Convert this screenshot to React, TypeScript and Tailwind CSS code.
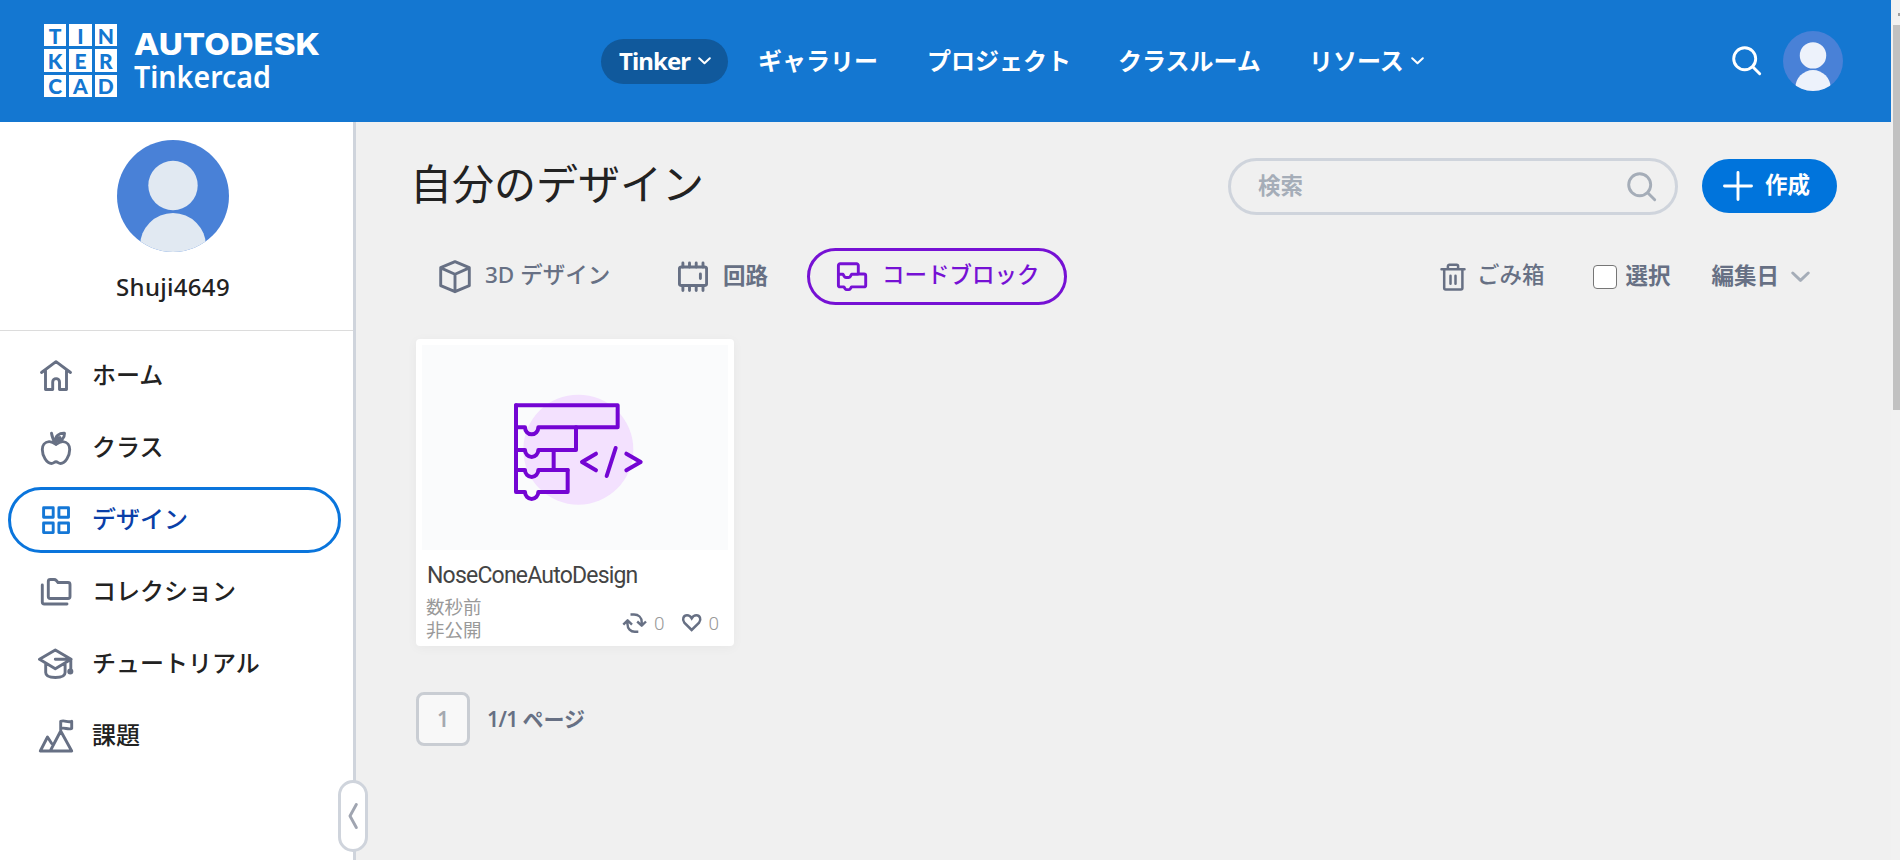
import { FC, ReactNode, SVGProps } from 'react';

type IconProps = SVGProps<SVGSVGElement>;

const Icon: FC<IconProps> = ({ children, ...props }) => (
  <svg
    fill="none"
    stroke="currentColor"
    strokeWidth={2.9}
    strokeLinecap="round"
    strokeLinejoin="round"
    {...props}
  >
    {children}
  </svg>
);

const HomeIcon = () => (
  <Icon width="36" height="36" viewBox="-2 -2 36 36">
    <path d="M1.5 12.5 16 1.7l14.5 10.8M5.5 10.5V29.5h7.2V22a3.4 3.4 0 0 1 6.8 0v7.5h7V10.5" />
  </Icon>
);

const AppleIcon = () => (
  <Icon width="36" height="36" viewBox="-2 -1 36 36">
    <path d="M16 13.5c-2.2-1.8-4.6-3-7-2.9C4.700 10.900 2.300 14.500 2.300 18.500c0 6 4.200 14 9.200 14 2 0 2.700-1.700 4.500-1.700s2.500 1.700 4.500 1.700c5 0 9.200-8 9.200-14 0-4-2.400-7.600-6.700-7.900-2.400-.1-4.800 1.100-7 2.900ZM11.500 2.300c.6 4.500 2 7.200 4.500 11.200M15.500 9.500c-.3-4.700 3.700-7.500 9-7.200.1 4.500-2.500 8.200-9 7.200Zm0 0 4.500-3" />
  </Icon>
);

const GridIcon = () => (
  <Icon width="36" height="36" viewBox="-4 -4 36 36">
    <rect x="1.600" y="1.700" width="9.600" height="9.600" />
    <rect x="16.900" y="1.700" width="9.600" height="9.600" />
    <rect x="1.600" y="17" width="9.600" height="9.600" />
    <rect x="16.900" y="17" width="9.600" height="9.600" />
  </Icon>
);

const FolderIcon = () => (
  <Icon width="36" height="36" viewBox="-2 -3 36 36">
    <path d="M8.300 4.500a2 2 0 0 1 2-2h3.700a3 3 0 0 1 2.300 1l1.700 2h10a2 2 0 0 1 2 2v12a2 2 0 0 1-2 2H10.300a2 2 0 0 1-2-2ZM2.300 8v17a2 2 0 0 0 2 2H27" />
  </Icon>
);

const CapIcon = () => (
  <Icon width="36" height="36" viewBox="0 -2 36 36">
    <path d="M1.500 11.300 17.300 2l15.800 9.300-15.800 9.400ZM17.300 11.300h15.500v11.500M7.700 16v8.500c0 3 3.500 5 9.700 5s9.700-2 9.700-5V16" />
    <circle cx="32.300" cy="23.500" r="1.600" fill="currentColor" />
  </Icon>
);

const MountainIcon = () => (
  <Icon width="36" height="36" viewBox="0 -1 36 36">
    <path d="M2.300 32 9.500 18l4.200 6.500M12.200 32 22.700 12 33.700 32ZM2.300 32h10M22.700 12V2.300c4-1.600 7 1.600 11 0V9.500c-4 1.600-7-1.600-11 0" />
  </Icon>
);

const CubeIcon = () => (
  <Icon width="34" height="35" viewBox="0 0 34 35">
    <path d="M17 2.700 31.300 8.700v18L17 32.700l-14.300-6v-18ZM2.700 8.900 17 15.300l14.300-6.400M17 15.300v17" />
  </Icon>
);

const ChipIcon = () => (
  <Icon width="30" height="32" viewBox="0 0 30 32">
    <rect x="1.400" y="6" width="27.200" height="18.500" rx="2" />
    <path d="M4.900 2v4M11.500 2v4M18.200 2v4M25 2v4M4.900 24.500v5M11.500 24.500v5M18.200 24.500v5M25 24.500v5M22.400 13v4.500" />
  </Icon>
);

const CodeblockIcon = () => (
  <Icon width="32" height="32" viewBox="0 0 32 32">
    <path d="M2.400 4.500a1.700 1.700 0 0 1 1.700-1.700h16.500a1.700 1.700 0 0 1 1.700 1.700V13H28a1.700 1.700 0 0 1 1.700 1.700v9.500a1.700 1.700 0 0 1-1.700 1.700H15.500l-1.200 1.800a2 2 0 0 1-1.700.9h-1.800a2 2 0 0 1-1.700-.9L7.900 25.900H4.100a1.700 1.700 0 0 1-1.700-1.700ZM2.400 13.300H7l1.300 2.200a2 2 0 0 0 1.700 1h2.600a2 2 0 0 0 1.700-1l1.300-2.200h6.700" />
  </Icon>
);

const TrashIcon = () => (
  <Icon width="26" height="30" viewBox="0 0 26 30" strokeWidth={2.5}>
    <path d="M1.500 7.300h23M7.900 7V4.200a1.500 1.500 0 0 1 1.500-1.500h7.200a1.500 1.500 0 0 1 1.500 1.500V7M4.200 7.300v18.800a1.500 1.500 0 0 0 1.500 1.500h15.200a1.500 1.500 0 0 0 1.500-1.500V7.300M10.500 13.700v8M15.500 13.700v8" />
  </Icon>
);

const SearchIcon: FC<IconProps> = props => (
  <Icon width="30" height="30" viewBox="0 0 30 30" {...props}>
    <circle cx="12.700" cy="12.700" r="11" />
    <path d="m20.700 20.700 7 7" />
  </Icon>
);

const ChevronDown: FC<IconProps> = props => (
  <Icon width="13" height="8" viewBox="0 0 13 8" strokeWidth={2} {...props}>
    <path d="m1.200 1.300 5.300 5 5.300-5" />
  </Icon>
);

const RemixIcon = () => (
  <Icon width="25" height="22" viewBox="0 0 25 22" strokeWidth={2.4} strokeLinecap="butt">
    <path d="M8.500 2.500h3.500c4.500 0 7.700 3 7.700 7.500v3M15.200 9.500l4.500 4.200 4.300-4.200M16.300 19.700h-3.500c-4.300 0-7.300-3.200-7.300-7.500V9.500M1.300 12.700l4.300-4.400L10 12.700" />
  </Icon>
);

const HeartIcon = () => (
  <Icon width="22" height="20" viewBox="0 0 22 20" strokeWidth={2.5} strokeLinejoin="miter">
    <path d="M10.700 17 3.300 9.600C.8 6.200 2.500 2.300 6 2.300c2.200 0 3.700 1.200 4.700 3 1-1.800 2.500-3 4.700-3 3.500 0 5.200 3.900 2.700 7.300Z" />
  </Icon>
);

const Avatar: FC<{ size: number; fill: string }> = ({ size, fill }) => (
  <svg width={size} height={size} viewBox="0 0 112 112" className="rounded-full">
    <rect width="112" height="112" fill="#4981d7" />
    <circle cx="56" cy="45.500" r="24.700" fill={fill} />
    <circle cx="56" cy="106" r="33" fill={fill} />
  </svg>
);

const CodeblockArt = () => (
  <svg width="307" height="205" viewBox="66 45 921 615" fill="none">
    <circle cx="535" cy="359" r="165" fill="#f3e1fe" />
    <g stroke="#7405d3" strokeWidth="12" strokeLinecap="round" strokeLinejoin="round">
      <path d="M348 226H653V292H415A20 21 0 0 1 375 292H348" />
      <path d="M528 292V360H415A20 21 0 0 1 375 360H348" />
      <path d="M461 360V420" />
      <path d="M503 420H415A20 21 0 0 1 375 420H348" />
      <path d="M503 420V486H415A20 21 0 0 1 375 486H348V226" />
      <path d="M588 371 546 396 588 421M647 354 620 438M679 371 722 396 679 421" />
    </g>
  </svg>
);

const LOGO_LETTERS = ['T', 'I', 'N', 'K', 'E', 'R', 'C', 'A', 'D'];

const Logo = () => (
  <div className="mb-px flex items-center gap-[17px]">
    <div className="grid size-[73px] grid-cols-3 gap-[3px]">
      {LOGO_LETTERS.map(letter => (
        <span
          key={letter}
          className="flex items-center justify-center bg-white font-['Lato',sans-serif] text-[21px] leading-none font-black text-[#1477d1]"
        >
          {letter}
        </span>
      ))}
    </div>
    <svg width="190" height="73" viewBox="0 0 190 73" fill="#fff">
      <text
        x="0"
        y="31"
        textLength="186"
        lengthAdjust="spacingAndGlyphs"
        className="font-['Inter',sans-serif] text-[30.500px] font-extrabold"
      >
        AUTODESK
      </text>
      <text
        x="0"
        y="64"
        textLength="137"
        lengthAdjust="spacingAndGlyphs"
        className="font-['Noto_Sans',sans-serif] text-[31px] font-semibold"
      >
        Tinkercad
      </text>
    </svg>
  </div>
);

const Header = () => (
  <header className="flex h-[122px] shrink-0 items-center bg-[#1477d1] pl-[44px] text-2xl leading-none font-bold text-white">
    <div className="w-[557px]">
      <Logo />
    </div>
    <nav className="flex items-center">
      <a className="flex h-[45px] w-[127px] items-center rounded-full bg-[#10599c] pl-[18px]">
        <span className="w-[79px] tracking-[-0.900px]">Tinker</span>
        <ChevronDown />
      </a>
      <a className="ml-[30px] w-[169px]">ギャラリー</a>
      <a className="w-[191px]">プロジェクト</a>
      <a className="w-[191px]">クラスルーム</a>
      <a className="flex items-center gap-[7px]">
        リソース
        <ChevronDown />
      </a>
    </nav>
    <div className="mr-[48px] ml-auto flex items-center gap-[21px]">
      <SearchIcon />
      <Avatar size={60} fill="#edf2fb" />
    </div>
  </header>
);

const MENU: { label: string; icon: ReactNode; active?: boolean }[] = [
  { label: 'ホーム', icon: <HomeIcon /> },
  { label: 'クラス', icon: <AppleIcon /> },
  { label: 'デザイン', icon: <GridIcon />, active: true },
  { label: 'コレクション', icon: <FolderIcon /> },
  { label: 'チュートリアル', icon: <CapIcon /> },
  { label: '課題', icon: <MountainIcon /> },
];

const Sidebar = () => (
  <aside className="relative w-[356px] shrink-0 border-r-3 border-[#cfd4dc] bg-white">
    <div className="flex h-[209px] flex-col items-center border-b border-[#dcdcdc] pt-[18px] pr-[7px]">
      <Avatar size={112} fill="#e1e9f2" />
      <p className="mt-[23px] text-2xl leading-none font-medium tracking-[0.300px] text-[#222]">
        Shuji4649
      </p>
    </div>
    <nav className="mt-3 flex flex-col gap-1.5 pr-3 pl-2">
      {MENU.map(({ label, icon, active }) => (
        <a
          key={label}
          className={
            active
              ? 'flex h-[66px] items-center gap-[18px] rounded-full border-3 border-[#0a75dc] pl-[27px] text-2xl leading-none font-medium text-[#0a3fa8]'
              : 'flex h-[66px] items-center gap-[18px] rounded-full border-3 border-transparent pl-[27px] text-2xl leading-none font-medium text-[#222]'
          }
        >
          <span className={active ? 'text-[#1477d6]' : 'text-[#677084]'}>{icon}</span>
          <span className="pb-0.5">{label}</span>
        </a>
      ))}
    </nav>
    <button className="absolute top-[658px] left-[338px] flex h-[72px] w-[30px] items-center justify-center rounded-full border-3 border-[#cfd4dc] bg-white text-[#a0a5b1]">
      <Icon width="10" height="26" viewBox="0 0 10 26">
        <path d="M8.300 1.500 2 13l6.300 11.500" />
      </Icon>
    </button>
  </aside>
);

const Toolbar = () => (
  <div className="flex items-start">
    <h1 className="-mt-px -ml-1.5 h-[61px] text-[42px] leading-[60px] font-normal text-[#222]">
      自分のデザイン
    </h1>
    <div className="mt-[3px] ml-auto flex items-start gap-6">
      <label className="flex h-[57px] w-[450px] items-center justify-between rounded-full border-3 border-[#cfd4dc] pr-[18px] pl-[27px] text-[22.500px] leading-none font-bold text-[#a5adb8]">
        検索
        <SearchIcon />
      </label>
      <button className="mt-px flex h-[54px] w-[135px] items-center rounded-full bg-[#0074dc] pl-[21px] text-[22.500px] leading-none font-bold text-white">
        <Icon width="30" height="30" viewBox="0 0 30 30">
          <path d="M15 1.500v27M1.500 15h27" />
        </Icon>
        <span className="ml-3 pb-0.5">作成</span>
      </button>
    </div>
  </div>
);

const Filters = () => (
  <div className="mt-[33px] flex h-[57px] items-center text-[22.500px] leading-none font-medium text-[#677084]">
    <a className="ml-[22px] flex w-[240px] items-center gap-[13px]">
      <CubeIcon />
      <span className="pb-0.5">3D デザイン</span>
    </a>
    <a className="flex w-[129px] items-center gap-[15px]">
      <ChipIcon />
      <span className="font-bold">回路</span>
    </a>
    <a className="flex h-[57px] w-[260px] items-center gap-[14px] rounded-full border-3 border-[#7611d4] pl-[26px] text-[#7611d4]">
      <CodeblockIcon />
      <span className="pb-0.5">コードブロック</span>
    </a>
    <a className="ml-auto flex items-center gap-[11px]">
      <TrashIcon />
      <span className="pb-0.5">ごみ箱</span>
    </a>
    <label className="ml-[49px] flex items-center gap-2 font-bold">
      <span className="size-6 rounded-[4px] border-[1.500px] border-[#767676] bg-white" />
      選択
    </label>
    <a className="mr-[27px] ml-[41px] flex items-center gap-3 font-bold">
      編集日
      <ChevronDown width="19" height="12" className="text-[#a5adb8]" />
    </a>
  </div>
);

const DesignCard = () => (
  <article className="mt-[34px] h-[307px] w-[318px] rounded bg-white px-1.5 pt-1.5 shadow-[0_2px_12px_rgba(0,0,0,0.04)]">
    <div className="bg-[#fafbfc]">
      <CodeblockArt />
    </div>
    <h2 className="mt-[13px] pl-[5px] font-['Roboto',sans-serif] text-[23px] leading-[26px] tracking-[-0.800px] text-[#444]">
      NoseConeAutoDesign
    </h2>
    <div className="mt-1.5 flex justify-between pl-1 text-[18.500px] leading-[23px] text-[#999]">
      <p>
        数秒前
        <br />
        非公開
      </p>
      <div className="mt-[15px] mr-[9px] flex h-[26px] items-center font-['Roboto',sans-serif] text-[19px] font-light">
        <span className="text-[#677084]">
          <RemixIcon />
        </span>
        <span className="ml-[7px]">0</span>
        <span className="ml-[17px] text-[#677084]">
          <HeartIcon />
        </span>
        <span className="ml-[5px]">0</span>
      </div>
    </div>
  </article>
);

const Pagination = () => (
  <div className="mt-[46px] flex items-center gap-[17px] text-[21px] leading-none font-bold text-[#677084]">
    <span className="flex size-[54px] items-center justify-center rounded-lg border-3 border-[#c9cdd3] bg-[#f8f8f8] font-semibold text-[#a5a9b0]">
      1
    </span>
    <span>
      <span className="font-semibold tracking-[-0.600px]">1/1 </span>
      ページ
    </span>
  </div>
);

const Scrollbar = () => (
  <div className="flex w-[9px] flex-col items-end bg-[#f1f1f1]">
    <div className="mt-[13px] h-3 w-[2px] border-t-3 border-[#a0a0a0]" />
    <div className="h-[385px] w-[7px] bg-[#c1c1c1]" />
  </div>
);

const App: FC = () => (
  <div className="flex h-[860px] w-[1900px] overflow-hidden bg-[#f0f0f0] font-['Noto_Sans','Noto_Sans_CJK_JP',sans-serif]">
    <div className="flex flex-1 flex-col">
      <Header />
      <div className="flex flex-1">
        <Sidebar />
        <main className="flex-1 pt-[33px] pr-[54px] pl-[60px]">
          <Toolbar />
          <Filters />
          <DesignCard />
          <Pagination />
        </main>
      </div>
    </div>
    <Scrollbar />
  </div>
);

export default App;
